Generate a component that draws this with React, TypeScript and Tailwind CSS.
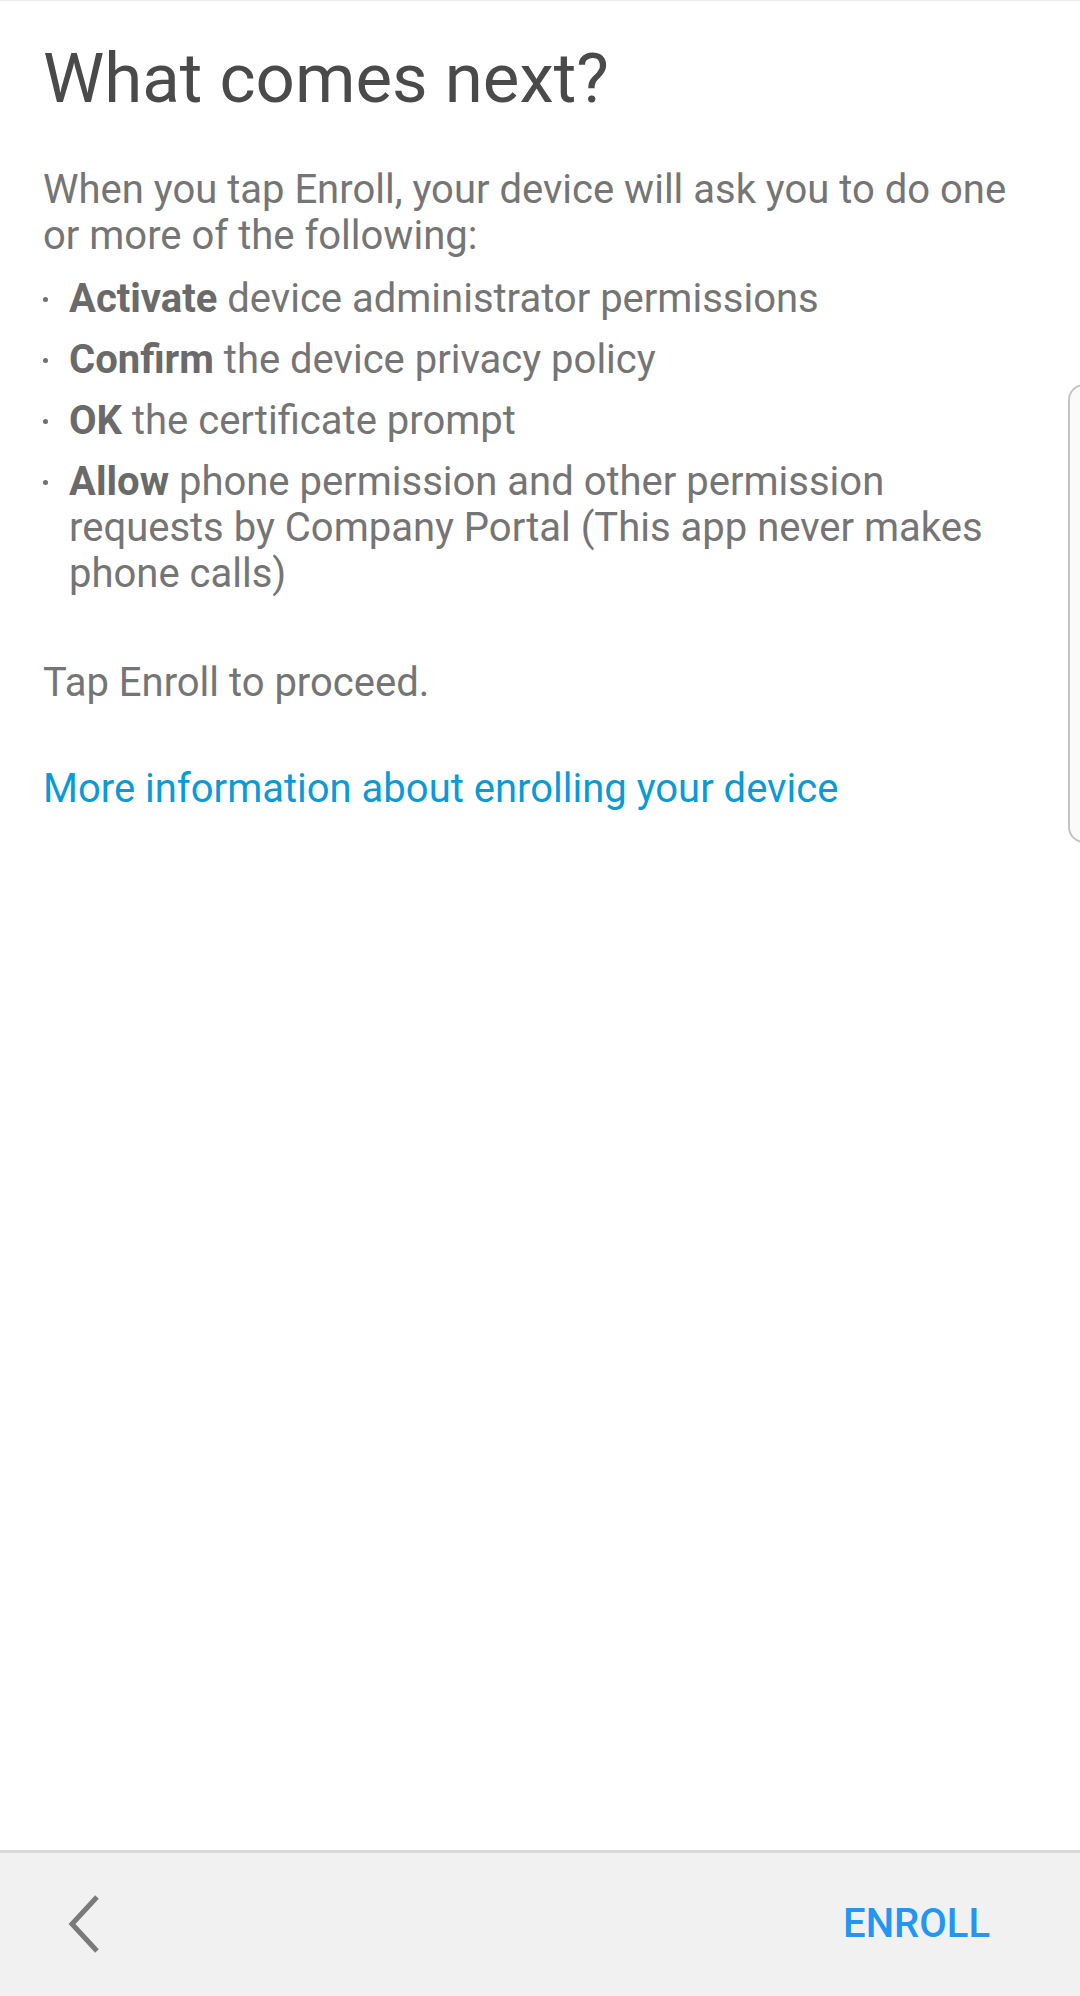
import React from "react";

export default function App() {
  const items: { b: string; t: string }[] = [
    { b: "Activate", t: " device administrator permissions" },
    { b: "Confirm", t: " the device privacy policy" },
    { b: "OK", t: " the certificate prompt" },
    {
      b: "Allow",
      t: " phone permission and other permission requests by Company Portal (This app never makes phone calls)",
    },
  ];
  return (
    <div
      className="relative w-[1080px] h-[1996px] bg-white flex flex-col overflow-hidden border-t border-[#ececec]"
      style={{ fontFamily: "Roboto, 'Noto Sans', sans-serif" }}
    >
      <div className="flex-1 px-[43px]">
        <h1 className="mt-[38px] text-[69px] leading-[80px] text-[#4a4a4a] font-normal">
          What comes next?
        </h1>
        <p className="mt-[48px] text-[40px] leading-[46px] text-[#757575]">
          When you tap Enroll, your device will ask you to do one or more of the following:
        </p>
        <ul className="mt-[17px] flex flex-col gap-[15px] text-[40px] leading-[46px] text-[#757575]">
          {items.map((it) => (
            <li key={it.b} className="flex">
              <span className="w-[26px] shrink-0 flex pt-[21px]">
                <span className="block w-[5px] h-[5px] rounded-full bg-[#707070]" />
              </span>
              <span className="pr-[20px]">
                <span className="font-bold text-[#6a6a6a]">{it.b}</span>
                {it.t}
              </span>
            </li>
          ))}
        </ul>
        <p className="mt-[63px] text-[40px] leading-[46px] text-[#757575]">Tap Enroll to proceed.</p>
        <p className="mt-[60px] text-[40px] leading-[46px] text-[#0a9ad6]">
          More information about enrolling your device
        </p>
      </div>
      <div className="h-[146px] shrink-0 border-t-[3px] border-[#d9d9d9] bg-[#f1f1f1] flex items-center justify-between pl-[66px] pr-[90px]">
        <svg width="34" height="60" viewBox="0 0 34 60" className="mt-[-2px]">
          <path d="M31 3 L6 30 L31 57" fill="none" stroke="#7a7a7a" strokeWidth="5" strokeLinejoin="miter" />
        </svg>
        <span className="text-[40px] font-medium text-[#2196f3] mt-[-1px]">ENROLL</span>
      </div>
      <div className="absolute left-[1068px] top-[383px] w-[40px] h-[459px] rounded-[16px] border-2 border-[#c4c4c4] bg-[#fafafa]" />
    </div>
  );
}
